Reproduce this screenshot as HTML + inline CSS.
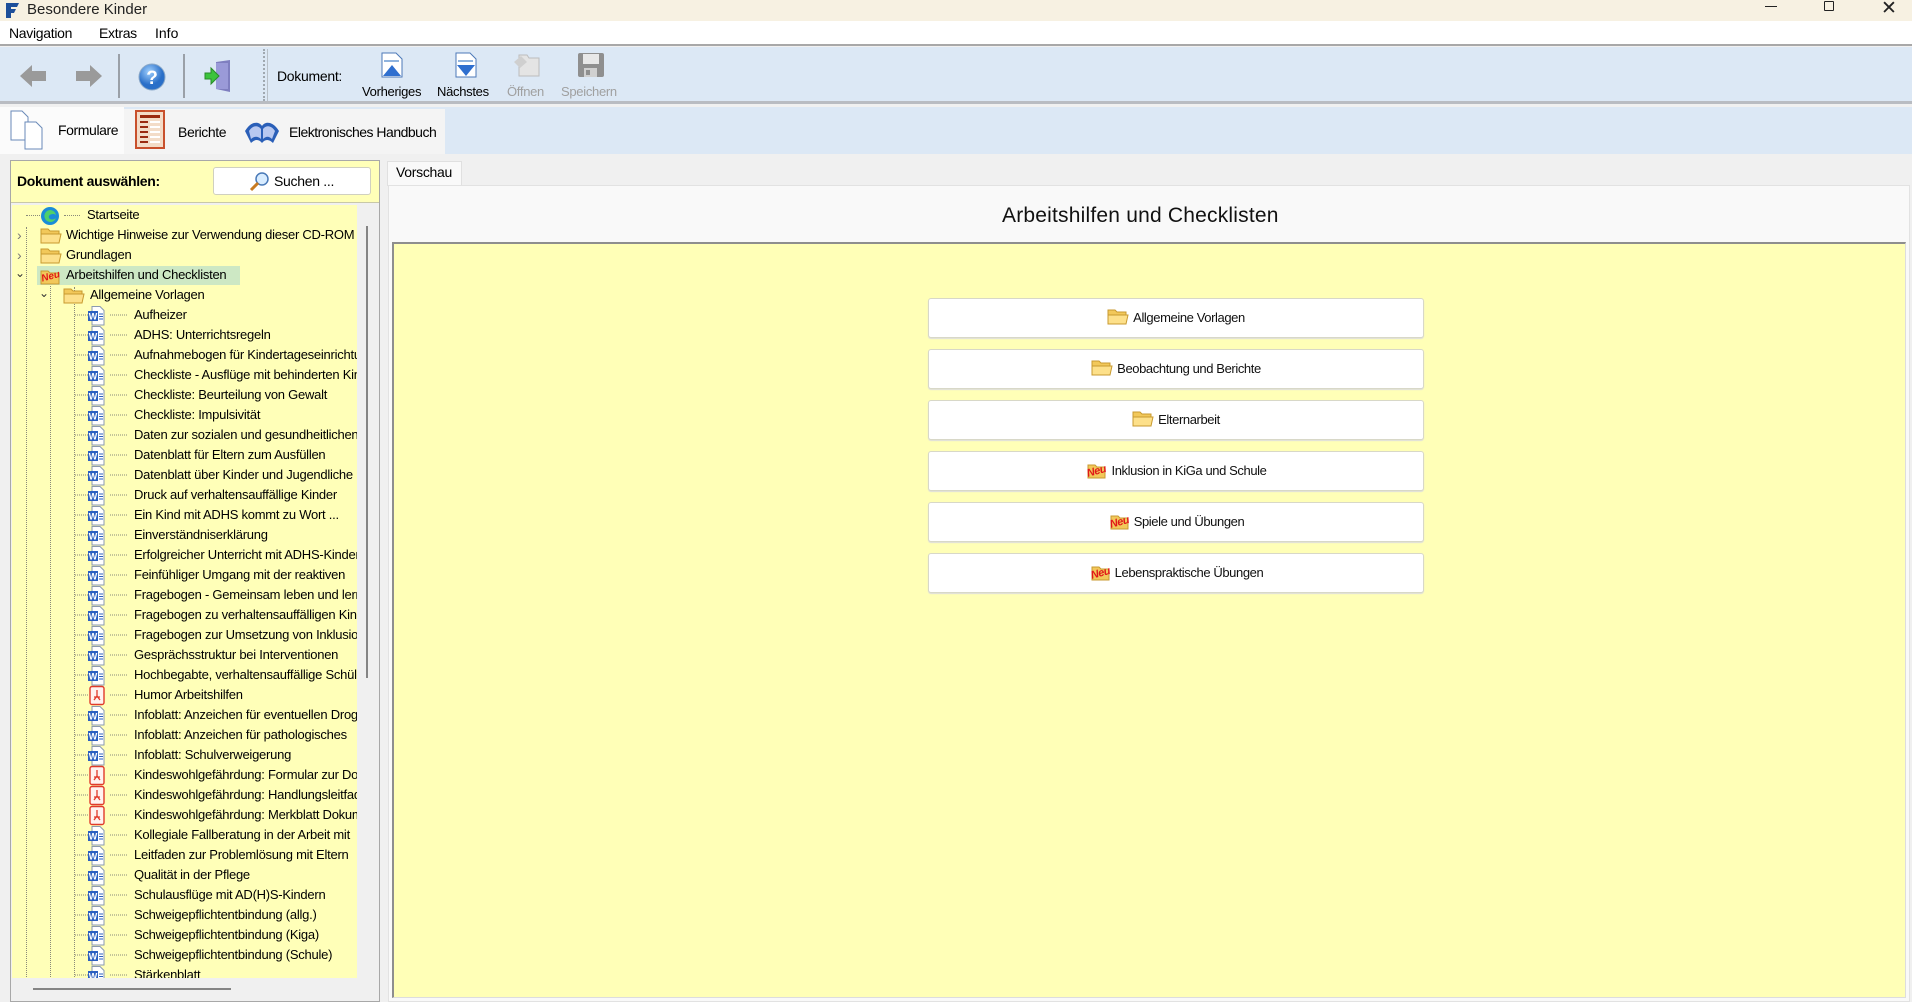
<!DOCTYPE html>
<html><head><meta charset="utf-8">
<style>
*{margin:0;padding:0;box-sizing:border-box}
body{width:1912px;height:1002px;overflow:hidden;background:#f0f0f0;font-family:"Liberation Sans",Arial,sans-serif;font-size:13px;color:#000;position:relative}
.a{position:absolute}
#title{left:0;top:0;width:1912px;height:21px;background:#f7f1e2}
#menu{left:0;top:21px;width:1912px;height:25px;background:#fff;border-bottom:2px solid #a8a8a8}
#tb{left:0;top:47px;width:1912px;height:57px;background:#dce8f5;border-bottom:3px solid #b9bcc2}
#tabs{left:0;top:107px;width:1912px;height:47px;background:#dce8f5}
.sep{position:absolute;top:54px;width:2px;height:44px;background:#9aa0a8}
.lbl{position:absolute;top:84px;font-size:13px;white-space:nowrap;letter-spacing:-0.3px}
.tree{left:12px;top:205px;width:345px;height:773px;background:#ffffb8;overflow:hidden}
.r{position:absolute;height:20px;line-height:20px;white-space:nowrap;letter-spacing:-0.25px}
.vl{position:absolute;width:0;border-left:1px dotted #8a8a7a}
.hl{position:absolute;height:0;border-top:1px dotted #8a8a7a}
.btn{position:absolute;left:928px;width:496px;height:40px;background:#fff;border:1px solid #d8d8c8;border-radius:3px;box-shadow:0 1px 1px #ddd;text-align:center;line-height:38px;font-size:13px;letter-spacing:-0.4px;color:#111}
.btn svg{vertical-align:-4px;margin-right:4px}
</style></head><body>
<div id="title" class="a">
 <svg class="a" style="left:3px;top:1px" width="18" height="18" viewBox="0 0 18 18"><path d="M3 2h13l-2 4H8v2h5l-2 4H8v5H3z" fill="#1e4f9a"/></svg>
 <span class="a" style="left:27px;top:1px;font-size:15px;color:#222">Besondere Kinder</span>
 <div class="a" style="left:1765px;top:6px;width:12px;height:1px;background:#222"></div>
 <div class="a" style="left:1824px;top:1px;width:10px;height:10px;border:1px solid #222;border-radius:1px"></div>
 <span class="a" style="left:1881px;top:-3px;font-size:19px;color:#222">✕</span>
</div>
<div id="menu" class="a">
 <span class="a" style="left:9px;top:4px;font-size:14px;letter-spacing:-0.3px">Navigation</span>
 <span class="a" style="left:99px;top:4px;font-size:14px;letter-spacing:-0.3px">Extras</span>
 <span class="a" style="left:155px;top:4px;font-size:14px">Info</span>
</div>
<div id="tb" class="a">
 <svg class="a" style="left:20px;top:18px" width="28" height="22"><path d="M0 11L12 0v6h14v10H12v6z" fill="#9a9a9a"/></svg>
 <svg class="a" style="left:74px;top:18px" width="28" height="22"><path d="M28 11L16 0v6H2v10h14v6z" fill="#9a9a9a"/></svg>
 <div class="sep" style="left:118px;top:7px"></div>
 <svg class="a" style="left:138px;top:16px" width="28" height="28"><defs><radialGradient id="g1" cx=".4" cy=".3"><stop offset="0" stop-color="#9fd0ff"/><stop offset="1" stop-color="#2a6fc8"/></radialGradient></defs><circle cx="14" cy="14" r="13" fill="url(#g1)" stroke="#8aa8c8"/><text x="14" y="21" font-size="19" font-weight="bold" fill="#fff" text-anchor="middle" font-family="Liberation Sans">?</text></svg>
 <div class="sep" style="left:183px;top:7px"></div>
 <svg class="a" style="left:203px;top:13px" width="30" height="32"><path d="M13 2l14-2v32l-14-3z" fill="#7f7fc0"/><rect x="13" y="3" width="12" height="26" fill="#9a9ad8"/><path d="M2 13h6v-5l8 8-8 8v-5H2z" fill="#3cc43c" stroke="#2a8a2a"/></svg>
 <div class="a" style="left:263px;top:2px;width:5px;height:52px;border-left:2px dotted #a0a8b0;border-right:1px solid #b8c0c8"></div>
 <span class="a" style="left:277px;top:21px;font-size:14px;letter-spacing:-0.3px">Dokument:</span>
 <svg class="a" style="left:381px;top:5px" width="22" height="26"><path d="M1 1h14l6 6v18H1z" fill="#fff" stroke="#4d79b8"/><rect x="3" y="8" width="15" height="2" fill="#8fb3de"/><path d="M2 24l9-11 9 11z" fill="#2f6fcf"/></svg>
 <span class="lbl" style="left:362px;top:37px">Vorheriges</span>
 <svg class="a" style="left:455px;top:5px" width="22" height="26"><path d="M1 1h14l6 6v18H1z" fill="#fff" stroke="#4d79b8"/><rect x="3" y="8" width="15" height="2" fill="#8fb3de"/><path d="M2 13l9 11 9-11z" fill="#2f6fcf"/></svg>
 <span class="lbl" style="left:437px;top:37px">Nächstes</span>
 <svg class="a" style="left:513px;top:5px" width="28" height="26"><path d="M6 3h8l2 3h10v18H6z" fill="#e4e4e4" stroke="#bdbdbd"/><path d="M1 10l7-6 6 6-7 6z" fill="#cfcfcf"/></svg>
 <span class="lbl" style="left:507px;top:37px;color:#a0a0a0">Öffnen</span>
 <svg class="a" style="left:577px;top:5px" width="28" height="26"><rect x="1" y="1" width="26" height="24" rx="2" fill="#8f8f8f"/><rect x="6" y="2" width="16" height="10" fill="#e8e8e8"/><rect x="7" y="16" width="13" height="9" fill="#d0d0d0"/><rect x="9" y="18" width="4" height="5" fill="#8f8f8f"/></svg>
 <span class="lbl" style="left:561px;top:37px;color:#a0a0a0">Speichern</span>
</div>
<div id="tabs" class="a">
 <div class="a" style="left:0;top:0;width:124px;height:47px;background:#fbfbfb"></div>
 <svg class="a" style="left:10px;top:3px" width="42" height="40"><path d="M1 1h11l6 6v23H1z" fill="#fff" stroke="#6a8ab8"/><path d="M15 12h11l6 6v21H15z" fill="#fff" stroke="#6a8ab8"/></svg>
 <span class="a" style="left:58px;top:15px;font-size:14px;letter-spacing:-0.4px">Formulare</span>
 <div class="a" style="left:124px;top:2px;width:109px;height:45px;background:#f4f4f4"></div>
 <svg class="a" style="left:135px;top:3px" width="32" height="40"><rect x="1" y="1" width="28" height="37" fill="#f3dcc8" stroke="#c8502c" stroke-width="2"/><g fill="#9a2a10"><rect x="5" y="5" width="20" height="3"/><rect x="5" y="11" width="8" height="2"/><rect x="5" y="16" width="8" height="2"/><rect x="5" y="21" width="8" height="2"/><rect x="5" y="26" width="8" height="2"/><rect x="5" y="31" width="8" height="2"/></g><g fill="#fff"><rect x="15" y="11" width="10" height="2"/><rect x="15" y="16" width="10" height="2"/><rect x="15" y="21" width="10" height="2"/><rect x="15" y="26" width="10" height="2"/><rect x="15" y="31" width="10" height="2"/></g></svg>
 <span class="a" style="left:178px;top:17px;font-size:14px;letter-spacing:-0.4px">Berichte</span>
 <div class="a" style="left:233px;top:2px;width:212px;height:45px;background:#f4f4f4"></div>
 <svg class="a" style="left:243px;top:10px" width="38" height="28"><path d="M2 14C8 4 16 4 19 9c3-5 11-5 17 5l-6 12c-4-4-8-4-11 0-3-4-7-4-11 0z" fill="#2a5fb8"/><path d="M6 14c4-6 9-6 12-2v10c-3-3-7-3-10 0zM20 12c3-4 8-4 12 2l-3 8c-3-3-6-3-9 0z" fill="#b8c8f0"/></svg>
 <span class="a" style="left:289px;top:17px;font-size:14px;letter-spacing:-0.5px">Elektronisches Handbuch</span>
</div>

<!-- left panel -->
<div class="a" style="left:10px;top:160px;width:370px;height:842px;background:#f0f0f0;border:1px solid #a8a8a8"></div>
<div class="a" style="left:11px;top:161px;width:368px;height:42px;background:#ffffb8;border-bottom:1px solid #c8c8a8"></div>
<span class="a" style="left:17px;top:173px;font-size:14px;font-weight:bold;letter-spacing:-0.3px">Dokument auswählen:</span>
<div class="a" style="left:213px;top:167px;width:158px;height:28px;background:#fff;border:1px solid #d0d0c0;border-radius:3px"></div>
<svg class="a" style="left:248px;top:171px" width="22" height="22"><circle cx="14" cy="8" r="6" fill="#d8ecff" stroke="#4a7ab8" stroke-width="1.5"/><path d="M10 12l-7 7" stroke="#c87a20" stroke-width="3"/></svg>
<span class="a" style="left:274px;top:173px;font-size:14px;letter-spacing:-0.3px">Suchen ...</span>
<div class="a" style="left:357px;top:205px;width:21px;height:773px;background:#f0f0f0"></div>
<div class="a" style="left:366px;top:226px;width:2px;height:452px;background:#858585"></div>
<div class="a" style="left:33px;top:988px;width:198px;height:2px;background:#858585"></div>

<div class="a tree">
 <div class="vl" style="left:14px;top:22px;height:800px"></div>
 <div class="vl" style="left:38px;top:62px;height:760px"></div>
 <div class="vl" style="left:62px;top:82px;height:740px"></div>
 <div class="hl" style="left:14px;top:10px;width:14px"></div>
 <svg class="a" style="left:28px;top:1px" width="20" height="20"><circle cx="10" cy="10" r="9" fill="#1a8cd8"/><path d="M10 4a6 6 0 1 0 6 8c-2 2-6 2-7 0-1-2 1-4 4-4 2 0 3 1 3 2a6 6 0 0 0-6-6z" fill="#4fd06a"/></svg>
 <div class="hl" style="left:52px;top:10px;width:16px"></div>
 <div class="r" style="left:75px;top:0">Startseite</div>

 <span class="a" style="left:5px;top:20px;color:#777;font-size:14px;line-height:20px">›</span>
 <svg class="a" style="left:28px;top:22px" width="22" height="17"><path d="M1 2h7l2 2h9v12H1z" fill="#f2c85a" stroke="#c89a30"/><path d="M1 7h20l-2 9H1z" fill="#fde08a" stroke="#c89a30"/></svg>
 <div class="r" style="left:54px;top:20px">Wichtige Hinweise zur Verwendung dieser CD-ROM</div>
 <span class="a" style="left:5px;top:40px;color:#777;font-size:14px;line-height:20px">›</span>
 <svg class="a" style="left:28px;top:42px" width="22" height="17"><path d="M1 2h7l2 2h9v12H1z" fill="#f2c85a" stroke="#c89a30"/><path d="M1 7h20l-2 9H1z" fill="#fde08a" stroke="#c89a30"/></svg>
 <div class="r" style="left:54px;top:40px">Grundlagen</div>
 <div class="a" style="left:25px;top:61px;width:203px;height:19px;background:#cde8c4"></div>
 <span class="a" style="left:3px;top:58px;color:#333;font-size:12px;line-height:20px">⌄</span>
 <svg class="a" style="left:28px;top:61px" width="22" height="19"><path d="M1 5h7l2 2h9v11H1z" fill="#f2c85a" stroke="#c89a30"/><text x="1" y="14" font-size="10" font-weight="bold" fill="#e01818" font-style="italic" font-family="Liberation Sans" transform="rotate(-15 8 10)">Neu</text></svg>
 <div class="r" style="left:54px;top:60px">Arbeitshilfen und Checklisten</div>
 <span class="a" style="left:27px;top:78px;color:#333;font-size:12px;line-height:20px">⌄</span>
 <svg class="a" style="left:51px;top:82px" width="22" height="17"><path d="M1 2h7l2 2h9v12H1z" fill="#f2c85a" stroke="#c89a30"/><path d="M1 7h20l-2 9H1z" fill="#fde08a" stroke="#c89a30"/></svg>
 <div class="r" style="left:78px;top:80px">Allgemeine Vorlagen</div>
 <svg width="0" height="0" style="position:absolute"><defs>
  <g id="w"><path d="M4 0.5h8l4 4v14.5H4z" fill="#fff" stroke="#8a9ab0"/><rect x="0" y="5" width="10" height="10" fill="#2b5fc0"/><text x="5" y="13.5" font-size="9" font-weight="bold" fill="#fff" text-anchor="middle" font-family="Liberation Sans">W</text><path d="M11 8h4M11 10.5h4M11 13h4" stroke="#2b5fc0"/></g>
  <g id="p"><rect x="2" y="0.5" width="14" height="18" rx="2" fill="#fff3f0" stroke="#e03a2a" stroke-width="1.4"/><path d="M9 4v6l-3 4M9 10l3 4M6 11h6" stroke="#e03a2a" stroke-width="1.3" fill="none"/></g>
 </defs></svg>
</div>

<!-- doc rows -->
<div class="a" style="left:12px;top:205px;width:345px;height:773px;overflow:hidden">
<svg class="a" style="left:0;top:0" width="345" height="800">
 <g stroke="#8a8a7a" stroke-dasharray="1 1">
 <path d="M63 110h13M63 130h13M63 150h13M63 170h13M63 190h13M63 210h13M63 230h13M63 250h13M63 270h13M63 290h13M63 310h13M63 330h13M63 350h13M63 370h13M63 390h13M63 410h13M63 430h13M63 450h13M63 470h13M63 490h13M63 510h13M63 530h13M63 550h13M63 570h13M63 590h13M63 610h13M63 630h13M63 650h13M63 670h13M63 690h13M63 710h13M63 730h13M63 750h13M63 770h13"/>
 <path d="M98 110h17M98 130h17M98 150h17M98 170h17M98 190h17M98 210h17M98 230h17M98 250h17M98 270h17M98 290h17M98 310h17M98 330h17M98 350h17M98 370h17M98 390h17M98 410h17M98 430h17M98 450h17M98 470h17M98 490h17M98 510h17M98 530h17M98 550h17M98 570h17M98 590h17M98 610h17M98 630h17M98 650h17M98 670h17M98 690h17M98 710h17M98 730h17M98 750h17M98 770h17"/>
 </g>
 <use href="#w" x="76" y="101"/><use href="#w" x="76" y="121"/><use href="#w" x="76" y="141"/><use href="#w" x="76" y="161"/><use href="#w" x="76" y="181"/><use href="#w" x="76" y="201"/><use href="#w" x="76" y="221"/><use href="#w" x="76" y="241"/><use href="#w" x="76" y="261"/><use href="#w" x="76" y="281"/><use href="#w" x="76" y="301"/><use href="#w" x="76" y="321"/><use href="#w" x="76" y="341"/><use href="#w" x="76" y="361"/><use href="#w" x="76" y="381"/><use href="#w" x="76" y="401"/><use href="#w" x="76" y="421"/><use href="#w" x="76" y="441"/><use href="#w" x="76" y="461"/><use href="#p" x="76" y="481"/><use href="#w" x="76" y="501"/><use href="#w" x="76" y="521"/><use href="#w" x="76" y="541"/><use href="#p" x="76" y="561"/><use href="#p" x="76" y="581"/><use href="#p" x="76" y="601"/><use href="#w" x="76" y="621"/><use href="#w" x="76" y="641"/><use href="#w" x="76" y="661"/><use href="#w" x="76" y="681"/><use href="#w" x="76" y="701"/><use href="#w" x="76" y="721"/><use href="#w" x="76" y="741"/><use href="#w" x="76" y="761"/>
</svg>
<div class="r" style="left:122px;top:100px">Aufheizer</div>
<div class="r" style="left:122px;top:120px">ADHS: Unterrichtsregeln</div>
<div class="r" style="left:122px;top:140px">Aufnahmebogen für Kindertageseinrichtungen</div>
<div class="r" style="left:122px;top:160px">Checkliste - Ausflüge mit behinderten Kindern</div>
<div class="r" style="left:122px;top:180px">Checkliste: Beurteilung von Gewalt</div>
<div class="r" style="left:122px;top:200px">Checkliste: Impulsivität</div>
<div class="r" style="left:122px;top:220px">Daten zur sozialen und gesundheitlichen Situation</div>
<div class="r" style="left:122px;top:240px">Datenblatt für Eltern zum Ausfüllen</div>
<div class="r" style="left:122px;top:260px">Datenblatt über Kinder und Jugendliche</div>
<div class="r" style="left:122px;top:280px">Druck auf verhaltensauffällige Kinder</div>
<div class="r" style="left:122px;top:300px">Ein Kind mit ADHS kommt zu Wort ...</div>
<div class="r" style="left:122px;top:320px">Einverständniserklärung</div>
<div class="r" style="left:122px;top:340px">Erfolgreicher Unterricht mit ADHS-Kindern</div>
<div class="r" style="left:122px;top:360px">Feinfühliger Umgang mit der reaktiven</div>
<div class="r" style="left:122px;top:380px">Fragebogen - Gemeinsam leben und lernen</div>
<div class="r" style="left:122px;top:400px">Fragebogen zu verhaltensauffälligen Kindern</div>
<div class="r" style="left:122px;top:420px">Fragebogen zur Umsetzung von Inklusion</div>
<div class="r" style="left:122px;top:440px">Gesprächsstruktur bei Interventionen</div>
<div class="r" style="left:122px;top:460px">Hochbegabte, verhaltensauffällige Schüler</div>
<div class="r" style="left:122px;top:480px">Humor Arbeitshilfen</div>
<div class="r" style="left:122px;top:500px">Infoblatt: Anzeichen für eventuellen Drogenkonsum</div>
<div class="r" style="left:122px;top:520px">Infoblatt: Anzeichen für pathologisches</div>
<div class="r" style="left:122px;top:540px">Infoblatt: Schulverweigerung</div>
<div class="r" style="left:122px;top:560px">Kindeswohlgefährdung: Formular zur Dokumentation</div>
<div class="r" style="left:122px;top:580px">Kindeswohlgefährdung: Handlungsleitfaden</div>
<div class="r" style="left:122px;top:600px">Kindeswohlgefährdung: Merkblatt Dokumentation</div>
<div class="r" style="left:122px;top:620px">Kollegiale Fallberatung in der Arbeit mit</div>
<div class="r" style="left:122px;top:640px">Leitfaden zur Problemlösung mit Eltern</div>
<div class="r" style="left:122px;top:660px">Qualität in der Pflege</div>
<div class="r" style="left:122px;top:680px">Schulausflüge mit AD(H)S-Kindern</div>
<div class="r" style="left:122px;top:700px">Schweigepflichtentbindung (allg.)</div>
<div class="r" style="left:122px;top:720px">Schweigepflichtentbindung (Kiga)</div>
<div class="r" style="left:122px;top:740px">Schweigepflichtentbindung (Schule)</div>
<div class="r" style="left:122px;top:760px">Stärkenblatt</div>
</div>

<!-- right panel -->
<div class="a" style="left:387px;top:161px;width:75px;height:25px;background:#f9f9f9;border:1px solid #e0e0e0;border-bottom:none"></div>
<span class="a" style="left:396px;top:164px;font-size:14px;letter-spacing:-0.3px">Vorschau</span>
<div class="a" style="left:388px;top:185px;width:1522px;height:817px;background:#f9f9f9;border:1px solid #e2e2e2"></div>
<div class="a" style="left:392px;top:242px;width:1514px;height:756px;background:#ffffb7;border-top:2px solid #8e8e8e;border-left:2px solid #8e8e8e;border-bottom:1px solid #ddd;border-right:1px solid #ddd"></div>
<div class="a" style="left:1002px;top:204px;width:293px;font-size:21px;color:#111;white-space:nowrap;letter-spacing:0.2px">Arbeitshilfen und Checklisten</div>

<svg width="0" height="0" style="position:absolute"><defs>
 <g id="fo"><path d="M1 2h7l2 2h9v12H1z" fill="#f2c85a" stroke="#c89a30"/><path d="M1 7h20l-2 9H1z" fill="#fde08a" stroke="#c89a30"/></g>
 <g id="nu"><path d="M3 6h7l2 2h8v11H3z" fill="#f2c85a" stroke="#c89a30"/><text x="1" y="16" font-size="11" font-weight="bold" font-style="italic" fill="#e01818" font-family="Liberation Sans" transform="rotate(-15 9 10)">Neu</text></g>
</defs></svg>
<div class="btn" style="top:298px"><svg width="22" height="18"><use href="#fo"/></svg>Allgemeine Vorlagen</div>
<div class="btn" style="top:349px"><svg width="22" height="18"><use href="#fo"/></svg>Beobachtung und Berichte</div>
<div class="btn" style="top:400px"><svg width="22" height="18"><use href="#fo"/></svg>Elternarbeit</div>
<div class="btn" style="top:451px"><svg width="22" height="20"><use href="#nu"/></svg>Inklusion in KiGa und Schule</div>
<div class="btn" style="top:502px"><svg width="22" height="20"><use href="#nu"/></svg>Spiele und Übungen</div>
<div class="btn" style="top:553px"><svg width="22" height="20"><use href="#nu"/></svg>Lebenspraktische Übungen</div>
</body></html>
